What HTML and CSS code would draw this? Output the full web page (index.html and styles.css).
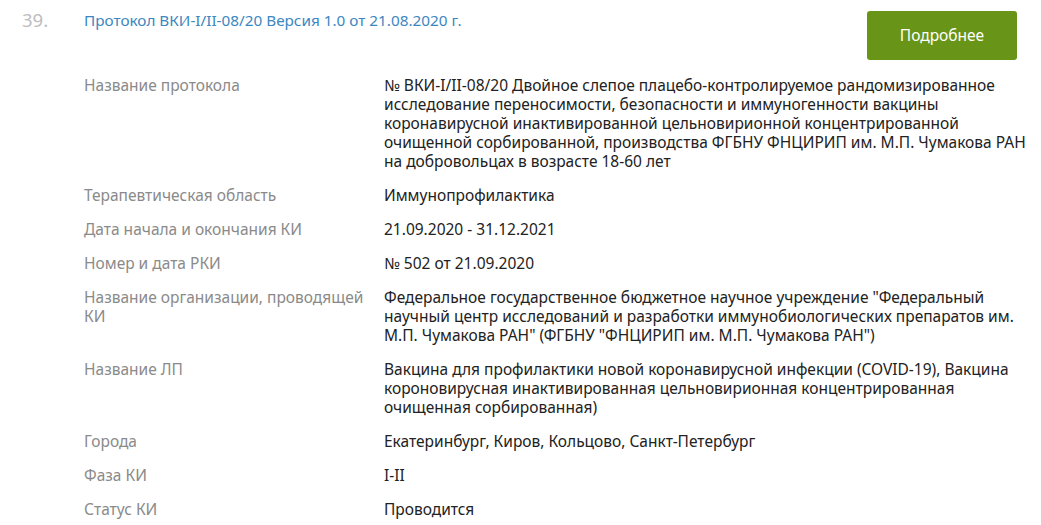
FILE: index.html
```html
<!DOCTYPE html>
<html lang="ru">
<head>
<meta charset="utf-8">
<link rel="stylesheet" href="styles.css">
</head>
<body>
<div class="item">
  <div class="num">39.</div>
  <div class="main">
    <div class="head">
      <a class="title" href="#">Протокол ВКИ-I/II-08/20 Версия 1.0 от 21.08.2020 г.</a>
      <a class="btn" href="#">Подробнее</a>
    </div>
    <dl class="props">
      <dt>Название протокола</dt>
      <dd>№ ВКИ-I/II-08/20 Двойное слепое плацебо-контролируемое рандомизированное исследование переносимости, безопасности и иммуногенности вакцины коронавирусной инактивированной цельновирионной концентрированной очищенной сорбированной, производства ФГБНУ ФНЦИРИП им. М.П. Чумакова РАН на добровольцах в возрасте 18-60 лет</dd>
      <dt>Терапевтическая область</dt>
      <dd>Иммунопрофилактика</dd>
      <dt>Дата начала и окончания КИ</dt>
      <dd>21.09.2020 - 31.12.2021</dd>
      <dt>Номер и дата РКИ</dt>
      <dd>№ 502 от 21.09.2020</dd>
      <dt>Название организации, проводящей КИ</dt>
      <dd>Федеральное государственное бюджетное научное учреждение "Федеральный научный центр исследований и разработки иммунобиологических препаратов им. М.П. Чумакова РАН" (ФГБНУ "ФНЦИРИП им. М.П. Чумакова РАН")</dd>
      <dt>Название ЛП</dt>
      <dd>Вакцина для профилактики новой коронавирусной инфекции (COVID-19), Вакцина короновирусная инактивированная цельновирионная концентрированная очищенная сорбированная)</dd>
      <dt>Города</dt>
      <dd>Екатеринбург, Киров, Кольцово, Санкт-Петербург</dd>
      <dt>Фаза КИ</dt>
      <dd>I-II</dd>
      <dt>Статус КИ</dt>
      <dd>Проводится</dd>
    </dl>
  </div>
</div>
</body>
</html>
```

FILE: styles.css
```css
* { box-sizing: border-box; }
html, body { margin: 0; padding: 0; background: #fff; }
body {
  font-family: "Noto Sans", "Open Sans", sans-serif;
  font-size: 15.5px;
  line-height: 19px;
  color: #222;
}
.item {
  display: flex;
  padding: 10px 14px 0 22px;
}
.num {
  width: 62px;
  flex: none;
  font-size: 18.5px;
  color: #bdbdbd;
  line-height: 20px;
}
.main { flex: 1; }
.head {
  display: flex;
  justify-content: space-between;
  align-items: flex-start;
  padding-right: 10px;
}
.title {
  color: #3b87c1;
  text-decoration: none;
  font-size: 15.3px;
  line-height: 20px;
}
.btn {
  margin-top: 1px;
  width: 150px;
  height: 49px;
  display: flex;
  align-items: center;
  justify-content: center;
  background: #689417;
  color: #fff;
  border-radius: 3px;
  text-decoration: none;
  font-size: 15.5px;
}
.props {
  display: grid;
  grid-template-columns: 300px 1fr;
  row-gap: 15px;
  margin: 16px 0 0;
}
.props dt {
  color: #8a8a8a;
  padding-right: 16px;
}
.props dd { margin: 0; }
```
